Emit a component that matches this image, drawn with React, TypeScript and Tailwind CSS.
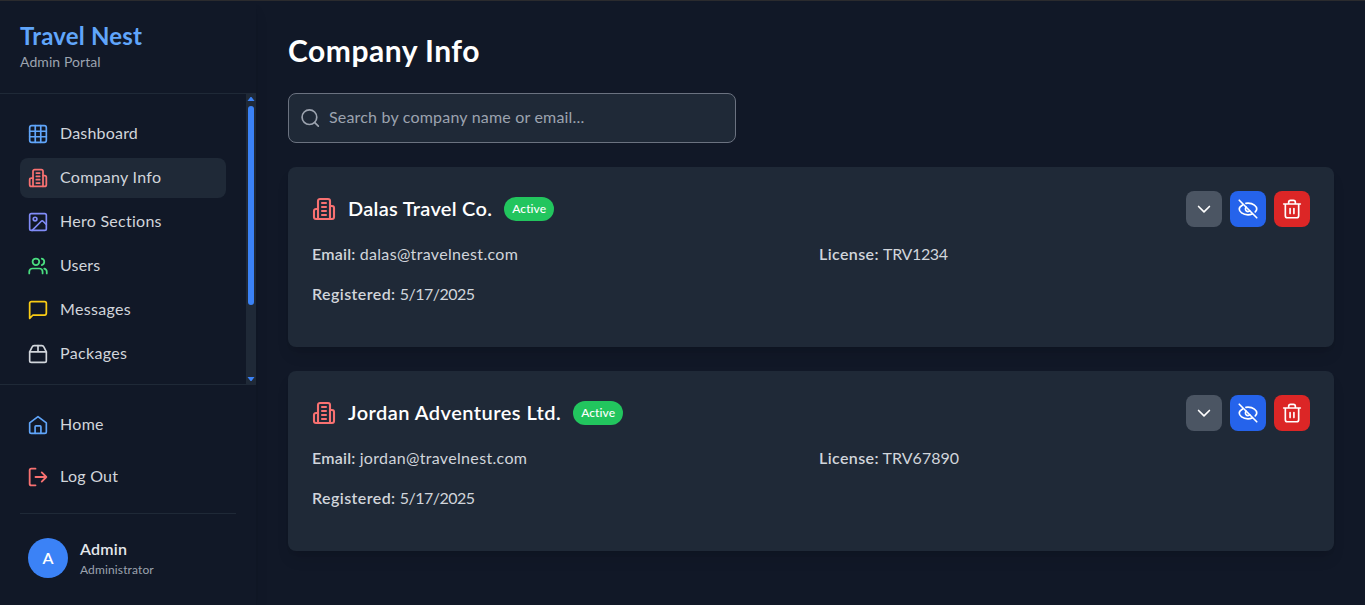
import React from "react";

type IconProps = { className?: string };

function Svg({ className, children, w = 2 }: { className?: string; children: React.ReactNode; w?: number }) {
  return (
    <svg viewBox="0 0 24 24" fill="none" stroke="currentColor" strokeWidth={w} strokeLinecap="round" strokeLinejoin="round" className={className}>
      {children}
    </svg>
  );
}

const GridIcon = ({ className }: IconProps) => (
  <Svg className={className} w={2}>
    <rect x="2" y="2" width="20" height="20" rx="2.5" />
    <path d="M2 8.7h20M2 15.3h20M8.7 2v20M15.3 2v20" />
  </Svg>
);
const BuildingIcon = ({ className }: IconProps) => (
  <Svg className={className} w={2.1}>
    <path d="M6 22V4a2 2 0 0 1 2-2h8a2 2 0 0 1 2 2v18Z" />
    <path d="M6 12H4a2 2 0 0 0-2 2v6a2 2 0 0 0 2 2h2" />
    <path d="M18 9h2a2 2 0 0 1 2 2v9a2 2 0 0 1-2 2h-2" />
    <path d="M10 6h4M10 10h4M10 14h4M10 18h4" />
  </Svg>
);
const ImageIcon = ({ className }: IconProps) => (
  <Svg className={className}>
    <rect x="2" y="2" width="20" height="20" rx="2" />
    <circle cx="8.5" cy="8.500" r="2.200" />
    <path d="m22 15-3.6-3.6a2 2 0 0 0-2.8 0L5 22" />
  </Svg>
);
const UsersIcon = ({ className }: IconProps) => (
  <Svg className={className} w={2.1}>
    <path d="M17.5 21v-2a4 4 0 0 0-4-4h-8a4 4 0 0 0-4 4v2" />
    <circle cx="9.5" cy="7" r="4" />
    <path d="M22.5 21v-2a4 4 0 0 0-3-3.87M16.5 3.13a4 4 0 0 1 0 7.75" />
  </Svg>
);
const MessageIcon = ({ className }: IconProps) => (
  <Svg className={className} w={2.1}>
    <path d="M22 16a2 2 0 0 1-2 2H6l-4 4V4a2 2 0 0 1 2-2h16a2 2 0 0 1 2 2z" />
  </Svg>
);
const PackageIcon = ({ className }: IconProps) => (
  <Svg className={className} w={2}>
    <path d="M2 9.5h20M12 2v7.5" />
    <path d="m2 9.5 3-6A2.6 2.6 0 0 1 7.300 2h9.400a2.600 2.600 0 0 1 2.300 1.500l3 6V20a2 2 0 0 1-2 2H4a2 2 0 0 1-2-2z" />
  </Svg>
);
const HomeIcon = ({ className }: IconProps) => (
  <Svg className={className} w={2}>
    <path d="M2 9.5 12 2l10 7.5V20a2 2 0 0 1-2 2H4a2 2 0 0 1-2-2z" />
    <path d="M8.5 22v-8a1 1 0 0 1 1-1h5a1 1 0 0 1 1 1v8" />
  </Svg>
);
const LogoutIcon = ({ className }: IconProps) => (
  <Svg className={className} w={2.2}>
    <path d="M9 2H4a2 2 0 0 0-2 2v16a2 2 0 0 0 2 2h5M9 12h13M16.5 6.5 22 12l-5.5 5.5" />
  </Svg>
);
const SearchIcon = ({ className }: IconProps) => (
  <Svg className={className} w={2}>
    <circle cx="11.300" cy="11" r="8.800" />
    <path d="m17.800 17.500 4.200 4.200" />
  </Svg>
);
const ChevronIcon = ({ className }: IconProps) => (
  <Svg className={className}>
    <path d="m5.5 9 6.5 6.5L18.5 9" />
  </Svg>
);
const EyeOffIcon = ({ className }: IconProps) => (
  <Svg className={className}>
    <path d="M9.88 9.88a3 3 0 1 0 4.24 4.24" />
    <path d="M9.5 5.3A11 11 0 0 1 12 5c6.5 0 10.5 4 10.5 7 0 1.2-.7 2.4-1.8 3.5" />
    <path d="M5.5 7.2C3.2 8.6 1.5 10.5 1.5 12c0 3 4 7 10.5 7a13 13 0 0 0 5-1" />
    <path d="m1.5 1.5 21 21" />
  </Svg>
);
const TrashIcon = ({ className }: IconProps) => (
  <Svg className={className}>
    <path d="M2 6h20M4 6v14a2.5 2.5 0 0 0 2.5 2.5h11A2.5 2.5 0 0 0 20 20V6M8 6V4a2.3 2.3 0 0 1 2.3-2.3h3.4A2.3 2.3 0 0 1 16 4v2M9.7 11.5v6M14.3 11.5v6" />
  </Svg>
);

const nav = [
  { label: "Dashboard", Icon: GridIcon, color: "text-[#60a5fa]", spacing: "tracking-[0.2px]" },
  { label: "Company Info", Icon: BuildingIcon, color: "text-[#f87171]", active: true, spacing: "tracking-[0.28px]" },
  { label: "Hero Sections", Icon: ImageIcon, color: "text-[#818cf8]", spacing: "tracking-[0.27px]" },
  { label: "Users", Icon: UsersIcon, color: "text-[#4ade80]", spacing: "tracking-[0.2px]" },
  { label: "Messages", Icon: MessageIcon, color: "text-[#facc15]", spacing: "tracking-[0.33px]" },
  { label: "Packages", Icon: PackageIcon, color: "text-[#d1d5db]", spacing: "tracking-[0.33px]" },
];

function Sidebar() {
  return (
    <aside className="flex h-full w-64 shrink-0 flex-col bg-[#111827] shadow-lg">
      <div className="h-[93px] border-b border-[#1f2937] px-5 pt-[19px]">
        <h2 className="text-2xl leading-8 font-bold tracking-[0.2px] text-[#60a5fa]">Travel Nest</h2>
        <p className="text-sm leading-5 tracking-[0.08px] text-[#9ca3af]">Admin Portal</p>
      </div>
      <div className="flex h-[291px] border-b border-[#1f2937]">
        <nav className="flex flex-1 flex-col gap-1 overflow-hidden px-5 pt-5">
          {nav.map(({ label, Icon, color, active, spacing }) => (
            <a key={label} className={`flex h-10 shrink-0 items-center gap-3 rounded-lg px-2 text-[#d1d5db] ${active ? "bg-[#1f2937]" : ""}`}>
              <Icon className={`size-5 ${color}`} />
              <span className={`pb-0.5 ${spacing}`}>{label}</span>
            </a>
          ))}
        </nav>
        <div className="flex w-[10px] flex-col items-center bg-[#1f2937] text-[#3b82f6]">
          <svg viewBox="0 0 10 12" className="h-3 w-[10px]" fill="currentColor"><path d="M4.500 3h1L8.500 7h-7z" /></svg>
          <div className="h-[199px] w-[6px] rounded-full bg-[#3b82f6]" />
          <svg viewBox="0 0 10 12" className="mt-auto h-3 w-[10px]" fill="currentColor"><path d="M4.500 9h1L8.500 5h-7z" /></svg>
        </div>
      </div>
      <div className="px-5 pt-5">
        <div className="flex flex-col gap-3 border-b border-[#1f2937] pb-4">
          <a className="flex h-10 items-center gap-3 px-2 text-[#d1d5db]"><HomeIcon className="size-5 text-[#60a5fa]" /><span className="pb-0.5 tracking-[0.3px]">Home</span></a>
          <a className="flex h-10 items-center gap-3 px-2 text-[#d1d5db]"><LogoutIcon className="size-5 text-[#f87171]" /><span className="pb-0.5 tracking-[0.27px]">Log Out</span></a>
        </div>
        <div className="flex items-center gap-3 px-2 pt-6">
          <div className="flex size-10 items-center justify-center rounded-full bg-[#3b82f6] font-semibold text-white">A</div>
          <div>
            <p className="-mt-px leading-6 font-semibold tracking-[0.2px] text-[#e5e7eb]">Admin</p>
            <p className="mt-px text-xs leading-4 tracking-[0.13px] text-[#9ca3af]">Administrator</p>
          </div>
        </div>
      </div>
    </aside>
  );
}

const companies = [
  { name: "Dalas Travel Co.", nameSpacing: "tracking-[0.28px]", email: "dalas@travelnest.com", license: "TRV1234", licenseSpacing: "tracking-[-0.36px]" },
  { name: "Jordan Adventures Ltd.", nameSpacing: "tracking-[0.47px]", email: "jordan@travelnest.com", license: "TRV67890", licenseSpacing: "tracking-[0px]" },
];

function CompanyCard({ name, nameSpacing, email, license, licenseSpacing }: (typeof companies)[number]) {
  return (
    <article className="h-[180px] rounded-lg bg-[#1f2937] p-6 text-[#d1d5db] shadow-lg">
      <header className="flex h-9 items-center">
        <BuildingIcon className="size-6 text-[#f87171]" />
        <h3 className={`ml-3 pb-0.5 text-xl font-semibold text-white ${nameSpacing}`}>{name}</h3>
        <span className="ml-3 flex h-6 w-[50px] items-center justify-center rounded-full bg-[#22c55e] text-xs font-medium tracking-[0.1px] text-white">Active</span>
        <div className="ml-auto flex gap-2 text-white">
          <button className="flex size-9 items-center justify-center rounded-lg bg-[#4b5563]"><ChevronIcon className="size-5" /></button>
          <button className="flex size-9 items-center justify-center rounded-lg bg-[#2563eb]"><EyeOffIcon className="size-5" /></button>
          <button className="flex size-9 items-center justify-center rounded-lg bg-[#dc2626]"><TrashIcon className="size-5" /></button>
        </div>
      </header>
      <div className="mt-[15px] grid grid-cols-2 gap-4">
        <p><span className="font-semibold tracking-[0.22px]">Email:</span> <span className="tracking-[0.33px]">{email}</span></p>
        <p><span className="font-semibold tracking-[0.4px]">License:</span> <span className={licenseSpacing}>{license}</span></p>
        <p><span className="font-semibold tracking-[0.42px]">Registered:</span> <span className="tracking-[-0.5px]">5/17/2025</span></p>
      </div>
    </article>
  );
}

export default function App() {
  return (
    <div className="flex h-[605px] w-full overflow-hidden border-t border-[#2b2b2e] bg-[#111827] font-['Lato',sans-serif]">
      <Sidebar />
      <main className="flex-1 pt-[31px] pr-[31px] pl-8">
        <h1 className="text-3xl leading-9 font-bold tracking-[0.5px] text-white">Company Info</h1>
        <div className="mt-[25px] flex h-[50px] w-[448px] items-center gap-[9px] rounded-lg border border-[#6b7280] bg-[#1f2937] px-[11px] text-[#9ca3af]">
          <SearchIcon className="size-5" />
          <span className="pb-0.5 tracking-[0.19px]">Search by company name or email...</span>
        </div>
        <div className="mt-6 flex flex-col gap-6">
          {companies.map((c) => <CompanyCard key={c.name} {...c} />)}
        </div>
      </main>
    </div>
  );
}
